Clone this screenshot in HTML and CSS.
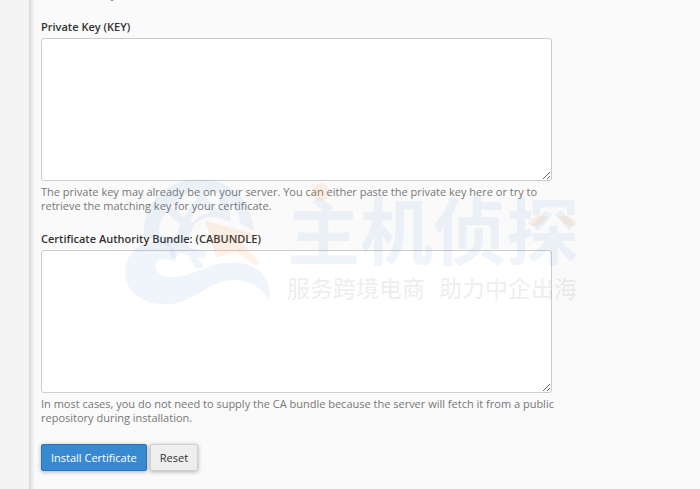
FILE: index.html
```html
<!DOCTYPE html>
<html lang="en">
<head>
<meta charset="utf-8">
<title>Install an SSL Website</title>
<link rel="stylesheet" href="styles.css">
</head>
<body>
<div class="page">
  <aside class="sidebar"></aside>
  <main class="content">
    <form class="form">
      <p class="help previous">retrieve it for your domain.</p>
      <div class="field">
        <label for="key">Private Key (KEY)</label>
        <textarea id="key"></textarea>
        <p class="help">The private key may already be on your server. You can either paste the private key here or try to retrieve the matching key for your certificate.</p>
      </div>
      <div class="field">
        <label for="cabundle">Certificate Authority Bundle: (CABUNDLE)</label>
        <textarea id="cabundle"></textarea>
        <p class="help">In most cases, you do not need to supply the CA bundle because the server will fetch it from a public repository during installation.</p>
      </div>
      <div class="actions">
        <button class="btn primary" type="submit">Install Certificate</button>
        <button class="btn" type="reset">Reset</button>
      </div>
    </form>
  </main>
  <div class="watermark" lang="zh-CN">
    <svg class="emblem" viewBox="0 0 540 450" aria-hidden="true">
      <g class="blue">
        <path d="M102 213C98 110 170 43 267 43C355 43 425 98 431 198L391 173C387 145 376 123 356 106L362 170L330 160C290 150 262 163 250 184L226 238L245 250L289 259L284 281L262 276L280 303L262 314L232 270L205 262L198 283L178 270L184 248C165 240 151 232 143 225C130 224 115 219 102 213ZM146 205C162 216 178 222 194 225L210 180L170 142C155 158 146 180 146 205ZM187 126L222 157C233 136 247 116 263 99L258 76C228 82 204 98 187 126ZM285 78L288 98C307 114 320 130 328 143L329 89C315 82 301 78 285 78ZM274 119C259 132 248 148 241 166L251 172C263 154 279 145 302 143C294 133 285 125 274 119Z"/>
        <path d="M148 229C80 230 45 270 46 325C48 384 99 418 167 418C248 418 285 355 359 346C410 341 451 363 478 405C488 345 442 292 371 292C289 292 253 338 180 336C145 334 128 310 140 292C149 279 174 280 193 292C207 262 184 231 148 229Z"/>
      </g>
      <path class="orange" d="M286 168L436 208L398 238L452 293L438 302L376 260L319 279Z"/>
    </svg>
    <div class="brand">
      <div class="wordmark">主机侦探</div>
      <div class="tagline"><span>服务跨境电商</span><span>助力中企出海</span></div>
      <svg class="accents" viewBox="0 0 306 100" aria-hidden="true">
        <circle class="orange" cx="34" cy="13" r="9"/>
        <path class="orange" d="M241 45C243 38 253 35 260 38C257 45 248 49 241 45ZM290 45C288 38 278 35 272 38C275 45 283 49 290 45Z"/>
      </svg>
    </div>
  </div>
</div>
</body>
</html>
```
FILE: styles.css
```css
* {
  box-sizing: border-box;
}

body {
  margin: 0;
  background: #fafafa;
  color: #333;
  font: 11px/14px "Open Sans", "Noto Sans", sans-serif;
}

.page {
  position: relative;
  display: flex;
  min-height: 100vh;
  overflow: hidden;
}

.sidebar {
  flex: 0 0 29px;
  background: #f4f4f4;
}

.content {
  flex: 1;
  padding: 0 12px 18px;
  background: linear-gradient(to right, #d4d4d4, #e6e6e6 2px, #fafafa 6px);
}

.form {
  max-width: 511px;
}

.help {
  margin: 0 -12px 0 0;
  padding-top: 4px;
  color: #777;
}

.previous {
  margin-top: -17px;
}

.field {
  padding-top: 19px;
}

label {
  display: block;
  margin-bottom: 4px;
  font-weight: 600;
}

textarea {
  display: block;
  width: 100%;
  height: 143px;
  padding: 6px;
  border: 1px solid #ccc;
  border-radius: 3px;
  background: #fff;
  font: inherit;
  resize: both;
}

.actions {
  display: flex;
  gap: 3px;
  padding-top: 19px;
}

.btn {
  padding: 5px 9px;
  border: 1px solid #d0d0d0;
  border-radius: 2px;
  background: #eee;
  color: #333;
  font: 11px/15px "Open Sans", "Noto Sans", sans-serif;
  box-shadow: 0 1px 4px rgba(0, 0, 0, 0.3);
}

.primary {
  border-color: #2a74bd;
  background: #3789d2;
  color: #fff;
}

.watermark {
  position: absolute;
  top: 165px;
  left: 110px;
  display: flex;
  pointer-events: none;
}

.emblem {
  width: 180px;
  height: 150px;
}

.brand {
  position: relative;
  padding-top: 20px;
  margin-left: -3px;
  font-family: "Noto Sans CJK SC", sans-serif;
  white-space: nowrap;
}

.wordmark {
  color: rgba(60, 130, 220, 0.08);
  font-size: 73px;
  font-weight: 700;
  line-height: 84px;
}

.tagline {
  display: flex;
  gap: 14px;
  padding-top: 3px;
  color: rgba(0, 0, 0, 0.08);
  font-size: 23px;
  font-weight: 500;
  line-height: 30px;
}

.accents {
  position: absolute;
  top: 14px;
  left: 0;
  width: 306px;
  height: 100px;
}

.blue {
  fill: rgba(60, 130, 220, 0.08);
  fill-rule: evenodd;
}

.orange {
  fill: rgba(255, 130, 30, 0.1);
}
```
